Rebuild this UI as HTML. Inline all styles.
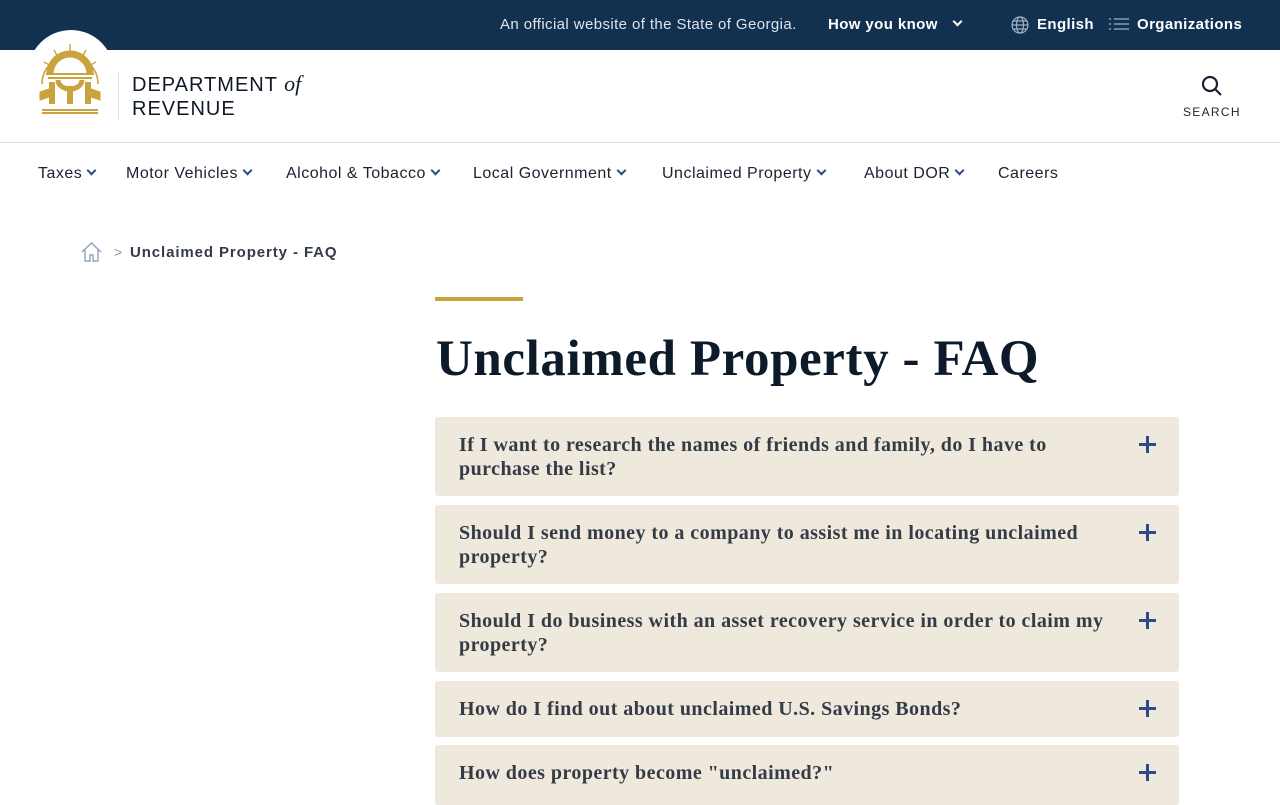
<!DOCTYPE html>
<html><head><meta charset="utf-8"><style>
*{margin:0;padding:0;box-sizing:border-box}
body{width:1280px;height:800px;overflow:hidden;background:#fff;font-family:"Liberation Sans",sans-serif;position:relative}
.top{position:absolute;left:0;top:0;width:1280px;height:50px;background:#12304f;color:#fff;font-size:15px;letter-spacing:.4px}
.top span{position:absolute;top:16px}
.circle{position:absolute;left:28px;top:30px;width:86px;height:86px;border-radius:50%;background:#fff}
.hdrline{position:absolute;left:0;top:142px;width:1280px;height:1px;background:#e2e2e2}
.nav{position:absolute;top:165px;font-size:16px;color:#1a2230;letter-spacing:.5px}
.chev{display:inline-block;width:7px;height:7px;border-right:2px solid #2b4a86;border-bottom:2px solid #2b4a86;transform:rotate(45deg);margin-left:6px;position:relative;top:-4px}
.acc{position:absolute;left:435px;width:744px;background:#efe8dc;border-radius:3px;font-family:"Liberation Serif",serif;font-weight:bold;font-size:20px;line-height:24px;color:#333b45;padding:16px 60px 0 24px;letter-spacing:.45px}
.plus{position:absolute;right:23px;top:19px;width:17px;height:17px}
.plus:before{content:"";position:absolute;left:0;top:7px;width:17px;height:3px;background:#2b4a86}
.plus:after{content:"";position:absolute;left:7px;top:0;width:3px;height:17px;background:#2b4a86}
</style></head><body>
<div class="top">
<span style="left:500px;color:#dfe4ea">An official website of the State of Georgia.</span>
<span style="left:828px;font-weight:bold">How you know</span>
<span style="left:948px;top:16px"><i class="chev" style="border-color:#fff"></i></span>
<svg style="position:absolute;left:1011px;top:16px" width="18" height="18" viewBox="0 0 18 18" fill="none" stroke="#9fb0c4" stroke-width="1.2"><circle cx="9" cy="9" r="8"/><ellipse cx="9" cy="9" rx="3.5" ry="8"/><path d="M1 9h16M2.5 5h13M2.5 13h13"/></svg>
<span style="left:1037px;font-weight:bold">English</span>
<svg style="position:absolute;left:1109px;top:17px" width="20" height="15" viewBox="0 0 20 15" stroke="#9fb0c4" stroke-width="1.2"><path d="M5 2h15M5 7h15M5 12h15M0 2h2M0 7h2M0 12h2"/></svg>
<span style="left:1137px;font-weight:bold">Organizations</span>
</div>
<div class="circle"></div>
<svg style="position:absolute;left:36px;top:40px" width="68" height="76" viewBox="0 0 68 76" fill="none" stroke="#c9a43c">
<path d="M6 44 A28 28 0 1 1 62 44" stroke-width="1.6"/>
<path d="M14 34 A20 20 0 0 1 54 34" stroke-width="7"/>
<path d="M34 4v10M18 10l5 9M50 10l-5 9M8 22l9 5M60 22l-9 5" stroke-width="1.4"/>
<path d="M10 34h48M12 38h44" stroke-width="2"/>
<path d="M22 40 A12 9 0 0 0 46 40" stroke-width="5"/>
<path d="M16 42v22M34 46v18M52 42v22" stroke-width="6"/>
<path d="M4 52l12 -4v8l-12 4zM64 52l-12 -4v8l12 4z" fill="#c9a43c" stroke-width="1"/>
<path d="M6 70h56M6 73h56" stroke-width="2"/>
</svg>
<div style="position:absolute;left:118px;top:72px;width:1px;height:48px;background:#ddd"></div>
<div style="position:absolute;left:132px;top:72px;font-size:20px;line-height:24px;color:#101828;letter-spacing:1px">DEPARTMENT <i style="font-family:'Liberation Serif',serif;font-size:22px;letter-spacing:0">of</i><br>REVENUE</div>
<svg style="position:absolute;left:1201px;top:75px" width="22" height="22" viewBox="0 0 22 22" fill="none" stroke="#1a2230" stroke-width="2.2"><circle cx="9" cy="9" r="7"/><path d="M14 14l6 6"/></svg>
<div style="position:absolute;left:1183px;top:105px;font-size:12px;letter-spacing:1.3px;color:#1a2230">SEARCH</div>
<div class="hdrline"></div>
<div class="nav" style="left:38px">Taxes<i class="chev"></i></div>
<div class="nav" style="left:126px">Motor Vehicles<i class="chev"></i></div>
<div class="nav" style="left:286px">Alcohol &amp; Tobacco<i class="chev"></i></div>
<div class="nav" style="left:473px">Local Government<i class="chev"></i></div>
<div class="nav" style="left:662px">Unclaimed Property<i class="chev"></i></div>
<div class="nav" style="left:864px">About DOR<i class="chev"></i></div>
<div class="nav" style="left:998px">Careers</div>
<svg style="position:absolute;left:81px;top:242px" width="21" height="20" viewBox="0 0 21 20" fill="none" stroke="#8ea3c4" stroke-width="1.4"><path d="M1 10L10.5 1 20 10M4 7v12h5v-6h3v6h5V7"/></svg>
<div style="position:absolute;left:114px;top:244px;color:#999;font-size:14px">&gt;</div>
<div style="position:absolute;left:130px;top:244px;font-size:15px;font-weight:bold;color:#333b45;letter-spacing:.9px">Unclaimed Property - FAQ</div>
<div style="position:absolute;left:435px;top:297px;width:88px;height:4px;background:#c9a43c"></div>
<div style="position:absolute;left:436px;top:330px;font-family:'Liberation Serif',serif;font-weight:bold;font-size:51px;color:#0d1a2a;letter-spacing:.6px">Unclaimed Property - FAQ</div>
<div class="acc" style="top:417px;height:79px">If I want to research the names of friends and family, do I have to purchase the list?<i class="plus"></i></div>
<div class="acc" style="top:505px;height:79px">Should I send money to a company to assist me in locating unclaimed property?<i class="plus"></i></div>
<div class="acc" style="top:593px;height:79px">Should I do business with an asset recovery service in order to claim my property?<i class="plus"></i></div>
<div class="acc" style="top:681px;height:56px">How do I find out about unclaimed U.S. Savings Bonds?<i class="plus"></i></div>
<div class="acc" style="top:745px;height:60px">How does property become "unclaimed?"<i class="plus"></i></div>
</body></html>
